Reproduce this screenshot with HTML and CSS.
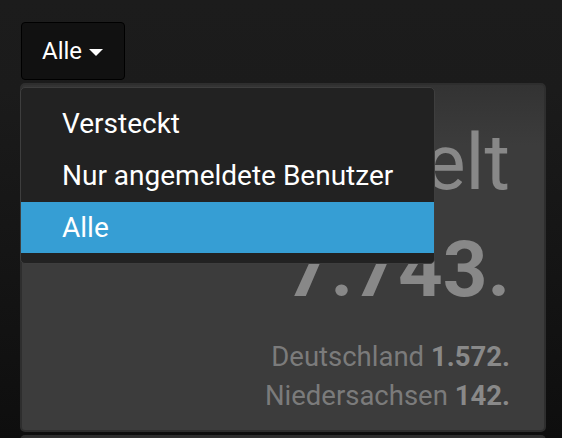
FILE: index.html
```html
<!DOCTYPE html>
<html lang="de">
<head>
<meta charset="utf-8">
<link rel="stylesheet" href="styles.css">
</head>
<body>
<div class="page">
  <div class="toolbar">
    <button class="select-btn"><span>Alle</span><span class="caret"></span></button>
  </div>
  <div class="panel">
    <div class="big">Welt</div>
    <div class="big bold">7.743.</div>
    <div class="sub">Deutschland <b>1.572.</b></div>
    <div class="sub">Niedersachsen <b>142.</b></div>
  </div>
  <div class="panel next"></div>
  <ul class="menu">
    <li>Versteckt</li>
    <li>Nur angemeldete Benutzer</li>
    <li class="active">Alle</li>
  </ul>
</div>
</body>
</html>
```
FILE: styles.css
```css
html, body {
  margin: 0;
  height: 100%;
}
body {
  background: linear-gradient(#1c1c1c 0, #1b1b1b 90px, #0e0e0e 438px);
  font-family: Roboto, "Liberation Sans", sans-serif;
  color: #fff;
  overflow: hidden;
}
.page {
  position: relative;
  padding: 22px 16px 0 20px;
}
.toolbar {
  display: flex;
  padding-left: 1px;
}
.select-btn {
  display: flex;
  align-items: center;
  gap: 7px;
  box-sizing: border-box;
  width: 104px;
  height: 58px;
  padding: 0 0 0 20px;
  background: #111;
  border: 1px solid #000;
  border-radius: 4px;
  color: #fff;
  font: 24px Roboto, "Liberation Sans", sans-serif;
}
.caret {
  width: 0;
  height: 0;
  border-left: 7.5px solid transparent;
  border-right: 7.5px solid transparent;
  border-top: 7px solid #fff;
  margin-top: 2px;
}
.panel {
  box-sizing: border-box;
  margin-top: 3px;
  width: 526px;
  height: 349px;
  border: 2px solid #2e2e2e;
  border-radius: 5px;
  background: linear-gradient(#333 0, #3c3c3c 60px, #3c3c3c 100%);
  padding: 22px 34px 0 0;
  text-align: right;
  color: #888;
}
.panel.next {
  height: 4px;
  border-bottom: 0;
  border-radius: 5px 5px 0 0;
}
.big {
  font-size: 78px;
  line-height: 112px;
  height: 112px;
}
.big.bold {
  font-weight: bold;
  margin-top: -5px;
  height: 123px;
}
.sub {
  font-size: 27.5px;
  line-height: 39px;
  color: #7b7b7b;
}
.sub b {
  color: #898989;
}
.menu {
  position: absolute;
  top: 87px;
  left: 20px;
  width: 415px;
  box-sizing: border-box;
  margin: 0;
  padding: 10px 0 10px;
  list-style: none;
  background: #222;
  border: 1px solid #3e3e3e;
  border-radius: 5px;
}
.menu li {
  height: 52px;
  line-height: 52px;
  padding-left: 41px;
  font-size: 28px;
  color: #fff;
}
.menu li.active {
  background: #369ed4;
  height: 51px;
  line-height: 51px;
}
```
